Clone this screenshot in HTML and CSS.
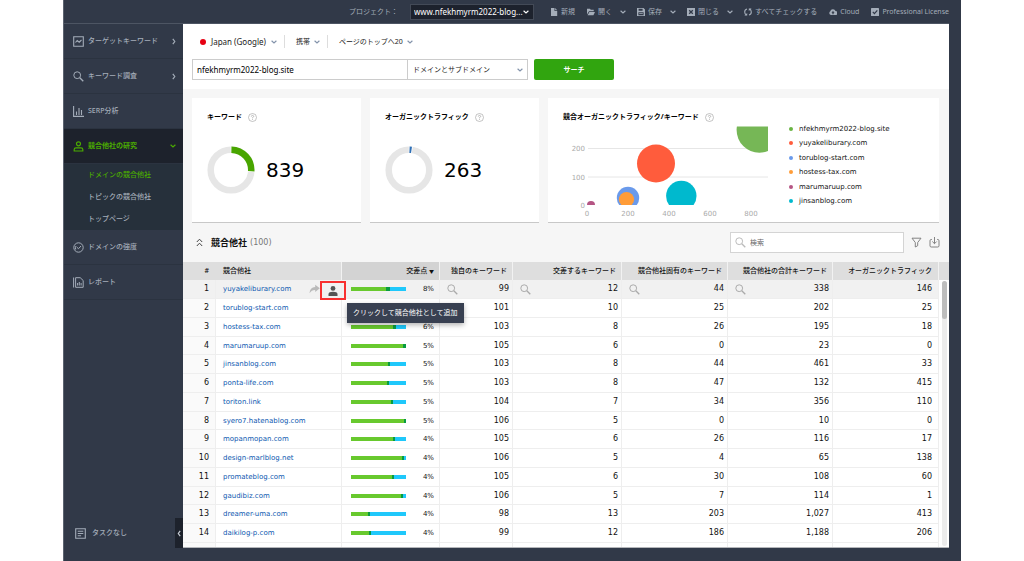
FILE: index.html
```html
<!DOCTYPE html>
<html lang="ja">
<head>
<meta charset="utf-8">
<meta name="viewport" content="width=device-width, initial-scale=1">
<title>競合他社の研究</title>
<link rel="stylesheet" href="styles.css">
</head>
<body>
<svg class="defs" aria-hidden="true">
  <symbol id="chev" viewBox="0 0 6 4"><path d="M.6 .8L3 2.900L5.400 .8" fill="none" stroke="currentColor" stroke-width="1.200"/></symbol>
  <symbol id="right" viewBox="0 0 4 7"><path d="M.8 .8L2.800 3.500L.8 6.200" fill="none" stroke="currentColor" stroke-width="1.200"/></symbol>
  <symbol id="mag" viewBox="0 0 11 11"><circle cx="4.200" cy="4.200" r="3.400" fill="none" stroke="currentColor"/><path d="M6.800 6.800L10.300 10.300" stroke="currentColor" stroke-width="1.300"/></symbol>
  <symbol id="help" viewBox="0 0 9 9"><circle cx="4.500" cy="4.500" r="4" fill="none" stroke="currentColor" stroke-width=".7"/><path d="M3.300 3.600Q3.400 2.400 4.500 2.400T5.700 3.500Q5.700 4.100 4.500 4.600V5.300M4.500 6v.8" fill="none" stroke="currentColor" stroke-width=".8"/></symbol>
</svg>
<div class="app">
  <header class="topbar">
    <label class="project-label" for="project">プロジェクト：</label>
    <span class="pick project"><select id="project"><option>www.nfekhmyrm2022-blog...</option></select><svg class="chev"><use href="#chev"/></svg></span>
    <button class="tool"><svg viewBox="0 0 8 8"><path d="M1 0h3.500v3H7.200v5H1zM5.200 0L7.200 2.300h-2z" fill="currentColor"/></svg>新規</button>
    <button class="tool"><svg viewBox="0 0 8 8"><path d="M0 .8h3l.7 1h3v1.400H2L0 6.500zM2.400 3.900H8L6.400 7.300H.600z" fill="currentColor"/></svg>開く</button>
    <button class="more" aria-label="開くメニュー"><svg class="chev"><use href="#chev"/></svg></button>
    <button class="tool"><svg viewBox="0 0 8 8"><path fill-rule="evenodd" d="M0 0h6.500L8 1.500V8H0zM1.600 .8v2h4v-2zM1.400 4.300v2.900h5.200V4.300zM2.200 5.200h3.600v.8H2.200z" fill="currentColor"/></svg>保存</button>
    <button class="more" aria-label="保存メニュー"><svg class="chev"><use href="#chev"/></svg></button>
    <button class="tool"><svg viewBox="0 0 8 8"><rect width="8" height="8" fill="currentColor"/><path d="M2.200 2.200l3.600 3.600M5.800 2.200L2.200 5.800" stroke="#313948" stroke-width="1.300"/></svg>閉じる</button>
    <button class="more" aria-label="閉じるメニュー"><svg class="chev"><use href="#chev"/></svg></button>
    <button class="tool"><svg viewBox="0 0 8 8"><path d="M3 1Q.6 1.700 .7 4T2.300 7M5 7Q7.400 6.300 7.300 4T5.700 1" fill="none" stroke="currentColor" stroke-width="1.100"/><path d="M.4 7.600h2.800V4.900zM7.600 .4H4.800v2.700z" fill="currentColor"/></svg>すべてチェックする</button>
    <button class="tool"><svg viewBox="0 0 8 8"><path fill-rule="evenodd" d="M2 7A2 2 0 0 1 1.300 3.300A2.700 2.700 0 0 1 6.500 3A2 2 0 0 1 6.300 7zM4 3L2.400 4.700h1v1.500h1.200V4.700h1z" fill="currentColor"/></svg>Cloud</button>
    <button class="tool"><svg viewBox="0 0 8 8"><rect width="8" height="8" rx=".6" fill="currentColor"/><path d="M1.800 3.900l1.600 1.700L6.300 2.300" fill="none" stroke="#313948" stroke-width="1.200"/></svg>Professional License</button>
  </header>
  <div class="body">
    <nav class="side">
      <a class="item" href="#"><svg viewBox="0 0 11 11"><path d="M.7 .7h9.600v9.600H.7zM2.500 6.500l1.700-2 2 1.700L8.500 4" fill="none" stroke="currentColor" stroke-width="1.100"/></svg><span>ターゲットキーワード</span><svg class="right"><use href="#right"/></svg></a>
      <a class="item" href="#"><svg><use href="#mag"/></svg><span>キーワード調査</span><svg class="right"><use href="#right"/></svg></a>
      <a class="item" href="#"><svg viewBox="0 0 11 11"><path d="M.6 0v10.400H11M3.500 9V5.500M6 9V2M8.500 9V4" fill="none" stroke="currentColor" stroke-width="1.100"/></svg><span>SERP分析</span></a>
      <a class="item active" href="#"><svg viewBox="0 0 11 11"><circle cx="5.500" cy="2.800" r="2" fill="none" stroke="currentColor" stroke-width="1.200"/><path d="M1.200 10V8.500Q1.200 6.800 3 6.800h5Q9.800 6.800 9.800 8.500V10z" fill="none" stroke="currentColor" stroke-width="1.200"/></svg><span>競合他社の研究</span><svg class="chev"><use href="#chev"/></svg></a>
      <div class="sub">
        <a class="on" href="#">ドメインの競合他社</a>
        <a href="#">トピックの競合他社</a>
        <a href="#">トップページ</a>
      </div>
      <a class="item" href="#"><svg viewBox="0 0 11 11"><circle cx="5.500" cy="5.500" r="4.700" fill="none" stroke="currentColor"/><path d="M3.800 5.200l1.700 1.500L8 4M2.700 7.500Q2 5.500 3 4" fill="none" stroke="currentColor"/></svg><span>ドメインの強度</span></a>
      <a class="item" href="#"><svg viewBox="0 0 11 11"><path d="M.6 .5v10M2.600 .7h4.600l3 2.800v6.800H2.600zM4.600 8.500V6M6.300 8.500V5M8.100 8.500V6" fill="none" stroke="currentColor"/></svg><span>レポート</span></a>
      <div class="side-foot">
        <a class="task" href="#"><svg viewBox="0 0 11 11"><path d="M.7 .7h9.600v9.600H.7zM2.700 3.300h5.600M2.700 5.500h5.600M2.700 7.700h3.400" fill="none" stroke="currentColor" stroke-width="1.100"/></svg><span>タスクなし</span></a>
        <button class="collapse" aria-label="サイドバーを閉じる"><svg viewBox="0 0 4 7"><path d="M3.200 .8L1.300 3.500L3.200 6.200" fill="none" stroke="currentColor" stroke-width="1.200"/></svg></button>
      </div>
    </nav>
    <main class="main">
      <section class="query">
        <div class="filters">
          <button><i class="flag"></i>Japan (Google)<svg class="chev"><use href="#chev"/></svg></button>
          <button>携帯<svg class="chev"><use href="#chev"/></svg></button>
          <button>ページのトップへ20<svg class="chev"><use href="#chev"/></svg></button>
        </div>
        <form class="form">
          <input class="domain" type="text" aria-label="ドメイン" value="nfekhmyrm2022-blog.site">
          <span class="pick scope"><select aria-label="範囲"><option>ドメインとサブドメイン</option></select><svg class="chev"><use href="#chev"/></svg></span>
          <button class="go" type="button">サーチ</button>
        </form>
      </section>
      <section class="cards">
        <article class="card">
          <h2>キーワード<svg class="help"><use href="#help"/></svg></h2>
          <div class="stat">
            <svg class="donut" viewBox="0 0 48 48"><circle cx="24" cy="24" r="20.300" fill="none" stroke="#e6e6e6" stroke-width="6.500"/><path d="M23.800 3.700A20.300 20.300 0 0 1 44.200 26" fill="none" stroke="#fff" stroke-width="6.500"/><path d="M24.400 3.700A20.300 20.300 0 0 1 44.200 25.300" fill="none" stroke="#48a500" stroke-width="6.500"/></svg>
            <strong>839</strong>
          </div>
        </article>
        <article class="card">
          <h2>オーガニックトラフィック<svg class="help"><use href="#help"/></svg></h2>
          <div class="stat">
            <svg class="donut" viewBox="0 0 48 48"><circle cx="24" cy="24" r="20.300" fill="none" stroke="#e6e6e6" stroke-width="6.500"/><path d="M23.800 3.700A20.300 20.300 0 0 1 27.300 4" fill="none" stroke="#fff" stroke-width="6.500"/><path d="M24.500 3.700A20.300 20.300 0 0 1 26.500 3.900" fill="none" stroke="#2f70b7" stroke-width="6.500"/></svg>
            <strong>263</strong>
          </div>
        </article>
        <article class="card wide">
          <h2>競合オーガニックトラフィック/キーワード<svg class="help"><use href="#help"/></svg></h2>
          <div class="chart">
            <svg class="bubbles" viewBox="0 0 206 94" role="img" aria-label="バブルチャート">
              <clipPath id="plot"><rect x="24" y="2.500" width="181" height="78.500"/></clipPath>
              <path d="M25 24.500H205M25 53H205" stroke="#e6e6e6"/>
              <g clip-path="url(#plot)">
                <circle cx="196.300" cy="6" r="22.700" fill="#76b756"/>
                <circle cx="93" cy="39.500" r="19" fill="#ff5c3c"/>
                <circle cx="65" cy="74" r="11.200" fill="#6a9aeb"/>
                <circle cx="63.500" cy="75.500" r="7.600" fill="#ff9c38"/>
                <circle cx="118.300" cy="72" r="15.200" fill="#00b9ce"/>
                <circle cx="28" cy="81" r="4" fill="#b55584"/>
              </g>
              <g class="axis" text-anchor="end"><text x="22" y="27">200</text><text x="22" y="56">100</text><text x="22" y="84">0</text></g>
              <g class="axis" text-anchor="middle"><text x="24" y="92">0</text><text x="65" y="92">200</text><text x="106" y="92">400</text><text x="147" y="92">600</text><text x="188" y="92">800</text></g>
            </svg>
            <ul class="legend">
              <li><i class="dot c1"></i>nfekhmyrm2022-blog.site</li>
              <li><i class="dot c2"></i>yuyakeliburary.com</li>
              <li><i class="dot c3"></i>torublog-start.com</li>
              <li><i class="dot c4"></i>hostess-tax.com</li>
              <li><i class="dot c5"></i>marumaruup.com</li>
              <li><i class="dot c6"></i>jinsanblog.com</li>
            </ul>
          </div>
        </article>
      </section>
      <section class="bar-head">
        <button class="icon-btn" aria-label="折りたたむ"><svg class="fold" viewBox="0 0 7 9"><path d="M.8 4L3.500 1.200L6.200 4M.8 8L3.500 5.200L6.200 8" fill="none" stroke="currentColor"/></svg></button>
        <h3>競合他社</h3><span class="count">(100)</span>
        <label class="search"><svg><use href="#mag"/></svg><input type="search" aria-label="検索" placeholder="検索"></label>
        <button class="icon-btn" aria-label="フィルター"><svg viewBox="0 0 11 11"><path d="M1 1.200h9L6.700 5.500v3.200L4.300 10V5.500z" fill="none" stroke="currentColor" stroke-width=".9"/></svg></button>
        <button class="icon-btn" aria-label="エクスポート"><svg viewBox="0 0 11 11"><path d="M3 2.500H2.200Q1 2.500 1 3.700v5.100Q1 10 2.200 10h6.600Q10 10 10 8.800V3.700Q10 2.500 8.800 2.500H8M5.500 0v6.500M3.300 4.500l2.200 2.200 2.200-2.200" fill="none" stroke="currentColor" stroke-width=".9"/></svg></button>
      </section>
      <section class="grid">
        <table>
          <colgroup><col class="w-n"><col class="w-d"><col class="w-x"><col class="w-u"><col class="w-i"><col class="w-o"><col class="w-t"><col class="w-g"></colgroup>
          <thead><tr><th>#</th><th>競合他社</th><th>交差点 <small>▼</small></th><th>独自のキーワード</th><th>交差するキーワード</th><th>競合他社固有のキーワード</th><th>競合他社の合計キーワード</th><th>オーガニックトラフィック</th></tr></thead>
          <tbody>
            <tr class="hover"><td>1</td><td><a href="#">yuyakeliburary.com</a><svg class="share" viewBox="0 0 11 10"><path d="M6.200 .8L10.800 4.300L6.200 8V5.900Q2.500 5.800 .5 9.300Q.8 3.500 6.200 3z" fill="#b9b9b9"/></svg><button class="add" aria-label="競合他社として追加"><svg viewBox="0 0 10 10"><circle cx="5" cy="2.400" r="2.400" fill="currentColor"/><path d="M.5 10V8Q.8 5.800 5 5.800T9.500 8V10z" fill="currentColor"/></svg></button><span class="tip" role="tooltip">クリックして競合他社として追加</span></td><td><div class="x"><span class="meter"><i style="width:64%"></i><b style="width:7%"></b></span>8%</div></td><td><div class="m"><svg><use href="#mag"/></svg>99</div></td><td><div class="m"><svg><use href="#mag"/></svg>12</div></td><td><div class="m"><svg><use href="#mag"/></svg>44</div></td><td><div class="m"><svg><use href="#mag"/></svg>338</div></td><td>146</td></tr>
            <tr><td>2</td><td><a href="#">torublog-start.com</a></td><td><div class="x"><span class="meter"><i style="width:70%"></i><b style="width:6%"></b></span>7%</div></td><td>101</td><td>10</td><td>25</td><td>202</td><td>25</td></tr>
            <tr><td>3</td><td><a href="#">hostess-tax.com</a></td><td><div class="x"><span class="meter"><i style="width:76%"></i><b style="width:6%"></b></span>6%</div></td><td>103</td><td>8</td><td>26</td><td>195</td><td>18</td></tr>
            <tr><td>4</td><td><a href="#">marumaruup.com</a></td><td><div class="x"><span class="meter"><i style="width:95%"></i><b style="width:5%"></b></span>5%</div></td><td>105</td><td>6</td><td>0</td><td>23</td><td>0</td></tr>
            <tr><td>5</td><td><a href="#">jinsanblog.com</a></td><td><div class="x"><span class="meter"><i style="width:67%"></i><b style="width:4%"></b></span>5%</div></td><td>103</td><td>8</td><td>44</td><td>461</td><td>33</td></tr>
            <tr><td>6</td><td><a href="#">ponta-life.com</a></td><td><div class="x"><span class="meter"><i style="width:65%"></i><b style="width:4%"></b></span>5%</div></td><td>103</td><td>8</td><td>47</td><td>132</td><td>415</td></tr>
            <tr><td>7</td><td><a href="#">toriton.link</a></td><td><div class="x"><span class="meter"><i style="width:73%"></i><b style="width:4%"></b></span>5%</div></td><td>104</td><td>7</td><td>34</td><td>356</td><td>110</td></tr>
            <tr><td>8</td><td><a href="#">syero7.hatenablog.com</a></td><td><div class="x"><span class="meter"><i style="width:96%"></i><b style="width:4%"></b></span>5%</div></td><td>106</td><td>5</td><td>0</td><td>10</td><td>0</td></tr>
            <tr><td>9</td><td><a href="#">mopanmopan.com</a></td><td><div class="x"><span class="meter"><i style="width:76%"></i><b style="width:4%"></b></span>4%</div></td><td>105</td><td>6</td><td>26</td><td>116</td><td>17</td></tr>
            <tr><td>10</td><td><a href="#">design-marlblog.net</a></td><td><div class="x"><span class="meter"><i style="width:93%"></i><b style="width:4%"></b></span>4%</div></td><td>106</td><td>5</td><td>4</td><td>65</td><td>138</td></tr>
            <tr><td>11</td><td><a href="#">promateblog.com</a></td><td><div class="x"><span class="meter"><i style="width:75%"></i><b style="width:4%"></b></span>4%</div></td><td>105</td><td>6</td><td>30</td><td>108</td><td>60</td></tr>
            <tr><td>12</td><td><a href="#">gaudibiz.com</a></td><td><div class="x"><span class="meter"><i style="width:91%"></i><b style="width:4%"></b></span>4%</div></td><td>106</td><td>5</td><td>7</td><td>114</td><td>1</td></tr>
            <tr><td>13</td><td><a href="#">dreamer-uma.com</a></td><td><div class="x"><span class="meter"><i style="width:31%"></i><b style="width:4%"></b></span>4%</div></td><td>98</td><td>13</td><td>203</td><td>1,027</td><td>413</td></tr>
            <tr><td>14</td><td><a href="#">daikilog-p.com</a></td><td><div class="x"><span class="meter"><i style="width:33%"></i><b style="width:4%"></b></span>4%</div></td><td>99</td><td>12</td><td>186</td><td>1,188</td><td>206</td></tr>
            <tr class="rest"><td></td><td></td><td></td><td></td><td></td><td></td><td></td><td></td></tr>
          </tbody>
        </table>
        <div class="scroll"><i></i></div>
      </section>
    </main>
  </div>
</div>
</body>
</html>
```

FILE: styles.css
```css
* { box-sizing: border-box; }
body {
  margin: 0;
  background: #fff;
  color: #111;
  font: 7px/12px "Noto Sans", "Noto Sans CJK JP", sans-serif;
}
button, input, select { font: inherit; color: inherit; margin: 0; padding: 0; border: 0; background: none; border-radius: 0; }
button { display: flex; align-items: center; white-space: nowrap; }
a { color: inherit; text-decoration: none; }
h2, h3, ul { margin: 0; padding: 0; list-style: none; }
svg { display: block; flex: none; }
.defs { width: 0; height: 0; position: absolute; }
.chev { width: 6px; height: 4px; }
.right { width: 4px; height: 7px; }

.app {
  min-height: 100vh;
  margin: 0 63px;
  padding: 0 12px 13px 0;
  background: #313948;
  border-left: 1px solid #5c6370;
  display: flex;
  flex-direction: column;
}

/* Top bar */
.topbar {
  height: 24px;
  display: flex;
  align-items: center;
  justify-content: flex-end;
  gap: 12px;
  color: #a4adb9;
  border-bottom: 1px solid #4d5563;
}
.pick { position: relative; display: flex; }
.pick select { appearance: none; width: 100%; }
.pick .chev { position: absolute; right: 4px; top: 50%; margin-top: -2px; pointer-events: none; }
.project { width: 124px; height: 16px; margin-right: 4px; background: #1d222d; border: 1px solid #434a57; color: #fff; font-size: 8px; }
.project select { padding-left: 3px; }
.tool { gap: 3px; }
.tool svg { width: 8px; height: 8px; }
.more { margin: 0 -1px 0 -4px; }

.body { flex: 1; display: flex; }

/* Sidebar */
.side { width: 119px; flex: none; display: flex; flex-direction: column; color: #a4adb9; font-weight: 500; }
.item { height: 35px; padding: 0 7px 0 9px; display: flex; align-items: center; gap: 4px; border-bottom: 1px solid #2b3340; }
.item > svg:first-child, .task svg { width: 11px; height: 11px; }
.item span { flex: 1; }
.active { background: #1d222c; color: #4bab00; font-weight: 700; }
.sub { background: #26303b; }
.sub a { display: block; padding-left: 24px; line-height: 22px; }
.sub .on { color: #4bab00; }
.side-foot { margin-top: auto; display: flex; align-items: center; justify-content: space-between; }
.task { display: flex; align-items: center; gap: 6px; padding-left: 11px; }
.collapse { width: 8px; height: 30px; background: #1d222c; color: #c4cad2; justify-content: center; }
.collapse svg { width: 4px; height: 7px; }

/* Query form */
.main { flex: 1; min-width: 0; background: #f6f6f6; border-bottom: 1px solid #b4b6ba; display: flex; flex-direction: column; }
.query { background: #fff; padding: 11px 9px 9px; color: #222; }
.filters { display: flex; }
.filters button { gap: 4px; height: 13px; padding-right: 7px; margin-right: 11px; }
.filters button + button { border-left: 1px solid #ddd; padding-left: 11px; margin-right: 0; }
.filters button:first-child { padding-left: 8px; margin-right: 0; gap: 5px; font-size: 8px; }
.filters .chev, .scope .chev { color: #8292aa; }
.flag { width: 6px; height: 6px; border-radius: 50%; background: #e60012; }
.form { display: flex; height: 21px; margin-top: 11px; }
.domain { width: 216px; padding: 0 4px; border: 1px solid #ccc; font-size: 8px; color: #000; }
.scope { width: 120px; border: 1px solid #ccc; border-left: 0; }
.scope select { padding-left: 5px; }
.go { width: 80px; margin-left: 6px; background: #31a50f; color: #fff; border-radius: 2px; justify-content: center; font-weight: 700; }

/* Cards */
.cards { display: grid; grid-template-columns: 169fr 169fr 391fr; gap: 9px; padding: 9px 10px 0 9px; }
.card { height: 125px; padding: 13px 15px 0; background: #fff; border-bottom: 1px solid #c8c8c8; }
.card h2 { display: flex; align-items: center; gap: 6px; font-size: 7px; line-height: 12px; color: #000; }
.help { width: 9px; height: 9px; color: #aaa; }
.stat { display: flex; align-items: center; gap: 11px; margin-top: 23px; }
.donut { width: 48px; height: 48px; }
.stat strong { font: 20px/24px "DejaVu Sans", sans-serif; color: #000; }
.chart { display: flex; gap: 20px; margin-top: 1px; }
.bubbles { width: 206px; height: 94px; }
.axis { font: 7px "DejaVu Sans", sans-serif; fill: #aaa; }
.legend { display: flex; flex-direction: column; justify-content: space-between; height: 84px; margin-top: -1px; font-family: "DejaVu Sans", sans-serif; color: #111; }
.legend li { display: flex; align-items: center; gap: 6px; }
.dot { width: 4px; height: 4px; border-radius: 50%; }
.c1 { background: #6ab443; }
.c2 { background: #ff5c3c; }
.c3 { background: #6a9aeb; }
.c4 { background: #ff9c38; }
.c5 { background: #b55584; }
.c6 { background: #00b9ce; }

/* Table heading */
.bar-head { display: flex; align-items: center; height: 39px; padding: 0 9px 0 13px; gap: 7px; color: #777; }
.bar-head h3 { font-size: 9px; color: #111; margin-left: 1px; }
.count { font: 8px "DejaVu Sans", sans-serif; margin-left: -4px; }
.icon-btn svg { width: 11px; height: 11px; }
.icon-btn .fold { width: 7px; height: 9px; color: #444; }
.search { width: 174px; height: 21px; margin-left: auto; padding: 0 4px; display: flex; align-items: center; gap: 4px; background: #fff; border: 1px solid #d4d4d4; }
.search svg { width: 11px; height: 11px; color: #bbb; }
.search input { flex: 1; min-width: 0; outline: 0; }
.search input::placeholder { color: #666; }

/* Table */
.grid { display: flex; flex: 1; background: #fff; }
table { flex: 1; min-width: 0; table-layout: fixed; border-collapse: separate; border-spacing: 0; }
.w-n { width: 33px; } .w-d { width: 126px; } .w-x { width: 98px; } .w-u { width: 73px; }
.w-i { width: 109px; } .w-o { width: 106px; } .w-t { width: 105px; } .w-g { width: 106px; }
th { height: 18px; padding: 0 5px 0 0; background: #dedede; border-right: 1px solid #f2f2f2; font-size: 7px; font-weight: 500; text-align: right; white-space: nowrap; }
th:first-child { border-right-color: #dedede; padding-right: 6px; }
th:nth-child(2) { text-align: left; padding-left: 7px; }
th:nth-child(3) { background: #d3d3d3; }
th:last-child, td:last-child { padding-right: 6px; }
th small { font-size: 5px; }
td { height: 19px; padding: 0 3px 0 0; border-right: 1px solid #eee; border-bottom: 1px solid #eee; font: 8px/12px "DejaVu Sans", sans-serif; text-align: right; }
tr:nth-child(4n) td { height: 18px; }
td:first-child { background: #fafafa; padding-right: 6px; }
td:nth-child(2) { position: relative; text-align: left; padding-left: 7px; font-size: 7px; color: #0c58b0; }
td:nth-child(3) { padding: 0 5px 0 9px; }
.hover td { background: #f1f1f1; }
.rest td { height: 4px; border-bottom: 0; }
.x, .m { display: flex; align-items: center; justify-content: space-between; }
.x { font-size: 7px; }
.m svg { width: 11px; height: 11px; margin-left: 7px; color: #aaa; }
.meter { display: flex; width: 55px; height: 4px; background: #1fc8fb; }
.meter i { background: #68c92e; }
.meter b { background: #079b42; }
.share { position: absolute; right: 21px; top: 4px; width: 11px; height: 10px; }
.add { position: absolute; right: -5px; top: 1px; width: 26px; height: 19px; border: 2px solid #f83030; color: #555; justify-content: center; z-index: 1; }
.add svg { width: 10px; height: 10px; }
.tip { position: absolute; left: 131px; top: 23px; z-index: 2; padding: 4px 6px; background: #384051; color: #fff; font: 7px/12px "Noto Sans", "Noto Sans CJK JP", sans-serif; white-space: nowrap; box-shadow: 0 2px 5px rgba(0, 0, 0, .3); }

.scroll { position: relative; width: 10px; padding: 19px 2px 1px 3px; background: linear-gradient(#dedede 18px, #fff 18px); }
.scroll::before { content: ""; position: absolute; inset: 19px 2px 1px 3px; border-radius: 3px; background: #ececec; }
.scroll i { display: block; position: relative; height: 38px; border-radius: 3px; background: #bdbdbd; }
```
